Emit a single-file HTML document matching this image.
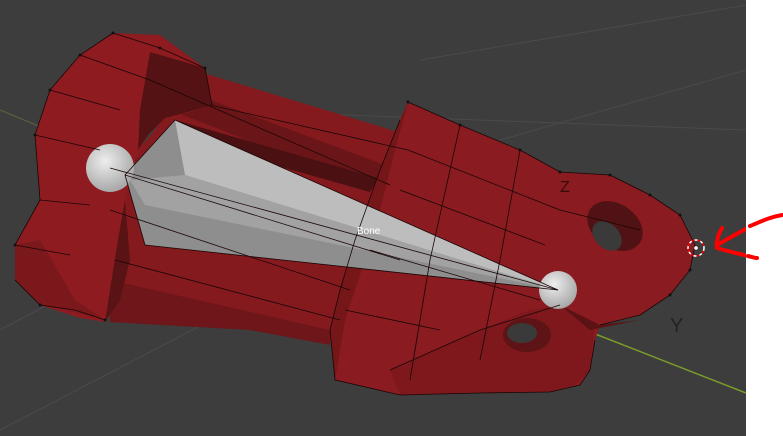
<!DOCTYPE html>
<html><head><style>
html,body{margin:0;padding:0;background:#3d3d3d;overflow:hidden}
svg{display:block}
</style></head><body>
<svg width="783" height="436" viewBox="0 0 783 436" xmlns="http://www.w3.org/2000/svg">
<defs>
<radialGradient id="sp" cx="40%" cy="35%" r="65%"><stop offset="0" stop-color="#eeeeee"/><stop offset="1" stop-color="#a8a8a8"/></radialGradient>
</defs>
<rect width="783" height="436" fill="#3d3d3d"/>
<g stroke="#4a4a4a" stroke-width="1">
<line x1="0" y1="330" x2="320" y2="160"/>
<line x1="0" y1="430" x2="250" y2="300"/>
<line x1="420" y1="60" x2="746" y2="5"/>
<line x1="500" y1="140" x2="746" y2="70"/>
<line x1="210" y1="110" x2="746" y2="130"/>
</g>
<line x1="585" y1="330" x2="746" y2="393" stroke="#7a9a2a" stroke-width="1.5"/>
<line x1="0" y1="110" x2="60" y2="135" stroke="#5a6a3a" stroke-width="1"/>
<polygon points="200,72 408,135 408,300 330,340 250,325 110,322 100,200" fill="#851a1e"/>
<polygon points="110,280 330,330 330,345 250,330 110,322" fill="#6e1619"/>
<polygon points="165,108 205,98 385,165 375,190" fill="#6a1618"/>
<polygon points="175,120 378,178 370,192 168,135" fill="#4a1012"/>
<polygon points="113,33 160,35 205,68 212,105 190,112 165,118 148,135 135,160 125,200 118,240 110,290 105,322 80,318 40,305 15,280 15,245 40,200 35,135 50,90 80,55" fill="#8e1b20"/>
<polygon points="150,52 205,68 212,105 188,112 165,118 148,135 138,150 140,110" fill="#541214"/>
<polygon points="118,240 125,200 130,260 120,300 105,322 110,290" fill="#5a1315"/>
<polygon points="15,245 40,240 75,300 105,320 75,312 40,305 15,280" fill="#7a181c"/>
<polygon points="408,102 460,125 520,150 560,172 610,175 650,195 680,215 695,245 690,270 670,295 640,315 600,325 595,340 590,370 580,385 550,392 480,393 400,395 335,380 330,330 340,290 355,240 380,170 400,120" fill="#8a1b20"/>
<polygon points="330,330 340,290 355,240 380,170 400,120 408,102 395,150 375,230 345,320 335,380" fill="#751619"/>
<polygon points="390,370 480,330 530,310 560,305 595,325 590,370 575,385 550,392 480,393 400,395" fill="#7e181c"/>
<polygon points="560,305 600,325 640,320 590,330" fill="#5a1214"/>
<ellipse cx="615" cy="226" rx="30" ry="22" transform="rotate(35 615 226)" fill="#501214"/>
<ellipse cx="607" cy="236" rx="17" ry="12" transform="rotate(45 607 236)" fill="#3a3a3a"/>
<ellipse cx="527" cy="335" rx="24" ry="17" fill="#5e1416"/>
<ellipse cx="522" cy="333" rx="15" ry="10" fill="#3a3a3a"/>
<polygon points="175,120 125,175 145,245 558,290" fill="#8e8e8e"/>
<polygon points="175,120 185,175 558,290" fill="#bdbdbd"/>
<polygon points="130,180 185,175 558,290 145,205" fill="#a2a2a2"/>
<circle cx="110" cy="168" r="24" fill="url(#sp)"/>
<circle cx="558" cy="290" r="19" fill="url(#sp)"/>
<g stroke="#1a0606" stroke-width="0.8" fill="none">
<polyline points="113,33 160,48 205,68 212,105"/>
<polyline points="35,135 50,90 80,55 113,33"/>
<polyline points="15,245 40,200 35,135"/>
<polyline points="15,280 40,305 75,310 105,320"/>
<polyline points="80,55 150,80"/><polyline points="50,90 120,110"/><polyline points="35,135 100,150"/>
<polyline points="40,200 90,205"/><polyline points="15,245 70,255"/>
<polyline points="210,105 408,150"/>
<polyline points="150,80 390,185"/>
<polyline points="125,175 400,260"/>
<polyline points="110,210 350,290"/>
<polyline points="115,260 340,320"/>
<polyline points="408,102 460,125 520,150 560,172 610,175 650,195 680,215 695,245 690,270 670,295 640,315 600,325"/>
<polyline points="400,120 380,170 355,240 340,290 330,330 335,380 400,395 480,393 550,392 580,385 590,370 595,340"/>
<polyline points="460,125 430,260 410,380"/>
<polyline points="520,150 500,260 480,360"/>
<polyline points="408,150 560,210 640,230"/>
<polyline points="400,190 545,245"/>
<polyline points="370,250 540,300"/>
<polyline points="345,310 440,330"/>
<polyline points="390,370 480,330 560,305"/>
<polyline points="175,120 558,290 145,245 125,175 175,120"/>
<polyline points="110,168 558,290"/>
</g>
<g fill="#111">
<circle cx="408" cy="102" r="1.5"/><circle cx="460" cy="125" r="1.5"/><circle cx="520" cy="150" r="1.5"/>
<circle cx="560" cy="172" r="1.5"/><circle cx="610" cy="175" r="1.5"/><circle cx="650" cy="195" r="1.5"/>
<circle cx="680" cy="215" r="1.5"/><circle cx="690" cy="270" r="1.5"/><circle cx="670" cy="295" r="1.5"/>
<circle cx="113" cy="33" r="1.5"/><circle cx="160" cy="48" r="1.5"/><circle cx="205" cy="68" r="1.5"/>
<circle cx="80" cy="55" r="1.5"/><circle cx="50" cy="90" r="1.5"/><circle cx="35" cy="135" r="1.5"/>
<circle cx="15" cy="245" r="1.5"/><circle cx="40" cy="305" r="1.5"/><circle cx="105" cy="320" r="1.5"/>
</g>
<text x="357" y="234" font-family="Liberation Sans, sans-serif" font-size="10" fill="#ffffff">Bone</text>
<text x="670" y="332" font-family="Liberation Sans, sans-serif" font-size="20" fill="#222">Y</text>
<text x="560" y="192" font-family="Liberation Sans, sans-serif" font-size="16" fill="#3a0a0a">Z</text>
<circle cx="696" cy="248" r="8" fill="none" stroke="#fff" stroke-width="1.5" stroke-dasharray="3 3"/>
<circle cx="696" cy="248" r="8" fill="none" stroke="#e00" stroke-width="1.5" stroke-dasharray="3 3" stroke-dashoffset="3"/>
<circle cx="696" cy="248" r="1.8" fill="#fff"/>
<path d="M780,215 C760,220 740,232 717,245 M722,228 C718,235 716,242 717,248 C730,252 745,255 757,258" fill="none" stroke="#ff0000" stroke-width="4" stroke-linecap="round" stroke-linejoin="round"/>
<rect x="746" y="0" width="37" height="436" fill="#ffffff"/>
<path d="M782,215 C770,217 760,222 750,226" stroke="#ff0000" stroke-width="4" fill="none" stroke-linecap="round"/>
<path d="M748,256 C752,257 755,258 757,258" stroke="#ff0000" stroke-width="4" fill="none" stroke-linecap="round"/>
</svg>
</body></html>
